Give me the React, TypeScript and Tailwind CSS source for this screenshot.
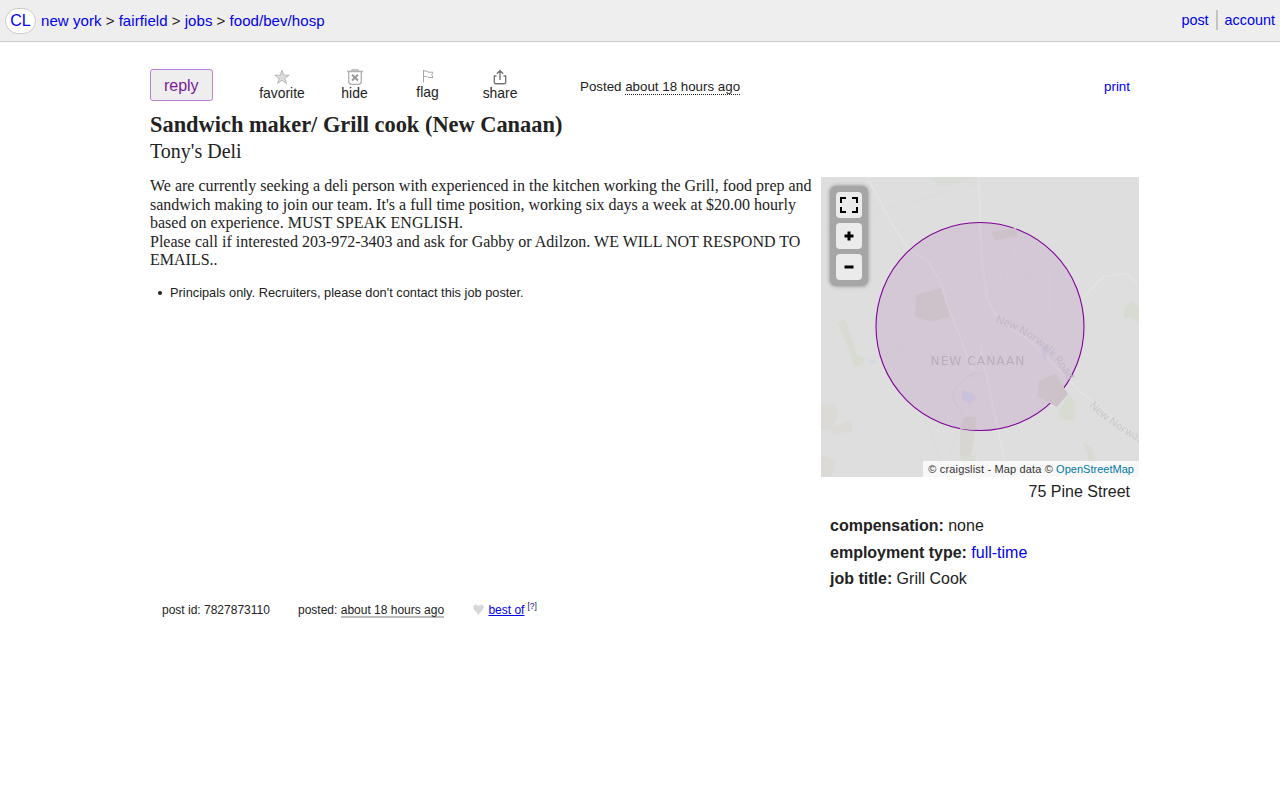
import type { ReactNode } from "react";

const link = "text-[#0000ee]";

function Action({ label, icon, className }: { label: string; icon: ReactNode; className: string }) {
  return (
    <button className={`flex shrink-0 flex-col items-center text-[13.9px] leading-4 ${className}`}>
      <span className="flex h-4 items-center">{icon}</span>
      {label}
    </button>
  );
}

function MapControl({ label, children }: { label: string; children: ReactNode }) {
  return (
    <button aria-label={label} className="flex h-[26px] w-[26px] items-center justify-center rounded-[4px] bg-[#ebebeb]">
      {children}
    </button>
  );
}

function MapTiles() {
  return (
    <svg width="318" height="300" viewBox="0 0 318 300" className="block" fontFamily="'Noto Sans', sans-serif">
      <rect width="318" height="300" fill="#dedede" />
      <g fill="#d5dacd" opacity=".8">
        <path d="M17 145l7-3 12 36 7 3-1 6-9 3-4-14-6-16z" />
        <path d="M140 278l15 1-2 14-8 4-6-6zM238 232l10-14 6 8v18l-16-2zM262 265l9 6 8 29h-14l2-22zM303 132l8-9 7 8v14l-8-5-7 1z" />
        <path d="M108 0l10 10 20-4 18-6z" opacity=".5" />
      </g>
      <g fill="#dad5cd">
        <path d="M0 229l14-3 4 10-9 17H0zM11 250l20-7v11l-20 4zM0 278l15 5-5 17H0z" opacity=".4" />
      </g>
      <g fill="none" stroke="#e3e3e3" strokeWidth="1.6">
        <path d="M47 0q12 28 36 66 8 10 23 17 14 18 20 43l26 67" />
        <path d="M158 0l2 78 6 42q6 24 41 42l53 53 58 47M263 120l10-11 10-10 12-1 9-2 13 10M159 168l28 132M157 300l-2-20" />
      </g>
      <g fill="none" stroke="#d7d7d7" strokeWidth=".6" opacity=".6">
        <path d="M0 55l72-25 86-24M50 42l42 62M62 130l65 173M57 180l111-28M80 230l63-29 61-9 54-20M124 300l18-72M180 109l15-58 57-27M197 71l17 40M184 110l50-24v54M159 110l26 10 40 29M139 157l35-46M117 172l49 36M210 184l45-44M189 195l29 40" />
      </g>
      <circle cx="159" cy="149.5" r="104" fill="#800098" fillOpacity=".1" stroke="#800098" strokeWidth="1.1" />
      <g fill="#cec2ca">
        <path d="M95 118l25-7 9 29-19 5-16-5zM170 55l25-4 2 8-23 4z" />
        <path d="M143 240h12l-1 13-15-1zM218 204l16-8 13 21-11 13-20-11z" />
      </g>
      <path d="M139 253l15 1-1 8-3 16-11 1z" fill="#d0cec6" opacity=".5" />
      <path d="M142 213l7 2 7 6-7 6-9-6zM221 168l6 4-3 12-3-6z" fill="#c8c1dc" opacity=".8" />
      <path d="M47 182l8 1 1 3-7 1z" fill="#d3d9df" />
      <path d="M142 236c-18-20-8-25 2-34 6-6 12-7 18-5" fill="none" stroke="#cbbfcd" strokeWidth=".8" />
      <path id="norwalk" d="M174 145C205 156 235 174 251 212" fill="none" />
      <path id="norwalk-east" d="M268 229C284 245 302 257 345 280" fill="none" />
      <g fontSize="10.8">
        <text fill="#c2b7c4"><textPath href="#norwalk">New Norwalk Road</textPath></text>
        <text fill="#c8c8c8"><textPath href="#norwalk-east">New Norwalk</textPath></text>
      </g>
      <text x="109.5" y="188" fill="#b9adba" fontSize="12.3" textLength="94" fontFamily="'DejaVu Sans', sans-serif">NEW CANAAN</text>
    </svg>
  );
}

export default function App() {
  return (
    <div className="min-h-[800px] bg-white font-['Liberation_Sans',Arial,sans-serif] text-[#222]">
      <header className="flex h-[42px] items-center border-b border-[#ccc] bg-[#eee] pr-[5px] pl-[5px] text-[14.67px]">
        <a className={`mr-[5px] flex h-[26px] w-[31px] items-center justify-center rounded-full border border-[#ccc] bg-white pt-px text-[16px] ${link}`}>CL</a>
        <nav className="flex gap-[4.1px] pt-px text-[15px] tracking-[0.07px]">
          <a className={link}>new york</a>
          <span>&gt;</span>
          <a className={link}>fairfield</a>
          <span>&gt;</span>
          <a className={link}>jobs</a>
          <span>&gt;</span>
          <a className={link}>food/bev/hosp</a>
        </nav>
        <div className={`mb-px ml-auto flex h-5 items-center text-[14.4px] ${link}`}>
          <a className="pt-[2px]">post</a>
          <span className="mr-[7px] ml-[7px] h-5 w-[2px] bg-[#c4c4c4]" />
          <a className="pt-[2px]">account</a>
        </div>
      </header>

      <main className="ml-[150px] w-[989px]">
        <div className="flex h-[59px] items-start pt-[27px]">
          <button className="h-8 w-[62.5px] shrink-0 rounded-[3px] border border-[#b97fd0] bg-[#eee] pt-px text-[16px] text-[#7a1a9b]">reply</button>
          <Action
            label="favorite"
            className="ml-[46px] w-[47px]"
            icon={<svg width="16" height="16" viewBox="0 0 16 16"><path d="M8 1.2l1.7 5h5.5l-4.4 3.2 1.7 5L8 11.3l-4.5 3.1 1.7-5L.8 6.2h5.5z" fill="#ddd" stroke="#b8b8b8" strokeWidth="1" /></svg>}
          />
          <Action
            label="hide"
            className="ml-[34px] w-[30px]"
            icon={<svg width="18" height="16" viewBox="0 0 18 16" fill="none" stroke="#b0b0b0" strokeWidth="1.3"><path d="M1 2.5h16M6 2V.8h6V2M2.7 2.7v9.8q0 2.8 2.8 2.8h7q2.8 0 2.8-2.8V2.7" /><path d="M6 5.8l6 5.6m0-5.6l-6 5.6" stroke="#999" strokeWidth="2" /></svg>}
          />
          <Action
            label="flag"
            className="-mt-px ml-[46px] w-[24px]"
            icon={<svg width="12" height="14" viewBox="0 0 12 14" fill="none" stroke="#aaa" strokeWidth="1"><path d="M1.5 1v12.5M1.5 2H5l1 1.2h5L9.8 5.7 11 8.5H6L5 7.5H1.5" /></svg>}
          />
          <Action
            label="share"
            className="ml-[42px] w-[37px]"
            icon={<svg width="14" height="16" viewBox="0 0 14 16" fill="none" stroke="#777" strokeWidth="1.4"><path d="M3.5 7H1.3v6.3q0 1.4 1.4 1.4h8.6q1.4 0 1.4-1.4V7h-2.2M7 11V2M3.8 4.7L7 1.5l3.2 3.2" /></svg>}
          />
          <p className="ml-[61.5px] pt-[10px] text-[13.33px] leading-[16px]">
            Posted <time className="inline-block h-[16px] border-b border-dotted border-[#222]">about 18 hours ago</time>
          </p>
          <a className={`mr-[9px] ml-auto pt-[10px] text-[13.33px] leading-[16px] ${link}`}>print</a>
        </div>

        <div className="h-[75.6px] pt-[11px] font-['Liberation_Serif',serif]">
          <h1 className="text-[22.4px] leading-[26px] font-bold">Sandwich maker/ Grill cook (New Canaan)</h1>
          <h2 className="text-[20px] leading-[27px]">Tony's Deli</h2>
        </div>

        <div className="flex h-[423.4px]">
          <section className="w-[671px] shrink-0">
            <p className="pt-[0.6px] font-['Liberation_Serif',serif] text-[16px] leading-[18.5px]">
              We are currently seeking a deli person with experienced in the kitchen working the Grill, food prep and<br />
              sandwich making to join our team. It's a full time position, working six days a week at $20.00 hourly<br />
              based on experience. MUST SPEAK ENGLISH.<br />
              Please call if interested 203-972-3403 and ask for Gabby or Adilzon. WE WILL NOT RESPOND TO<br />
              EMAILS..
            </p>
            <ul className="mt-[15px] flex items-center pl-[8px] text-[12.8px] leading-4">
              <li className="flex items-center gap-[8px]">
                <span className="h-[4px] w-[4px] rounded-full bg-[#222]" />
                Principals only. Recruiters, please don't contact this job poster.
              </li>
            </ul>
          </section>

          <aside className="w-[318px] shrink-0">
            <div className="relative h-[300px] overflow-hidden">
              <MapTiles />
              <div className="absolute top-[9px] left-[9px] flex flex-col gap-[5px] rounded-[6px] bg-[#a6a6a6] p-[6px] shadow-[0_0_4px_#888]">
                <MapControl label="Full screen">
                  <svg width="18" height="16" viewBox="0 0 18 16" fill="none" stroke="#000" strokeWidth="2"><path d="M1 6V1h5M12 1h5v5M17 10v5h-5M6 15H1v-5" /></svg>
                </MapControl>
                <MapControl label="Zoom in">
                  <svg width="10" height="10" viewBox="0 0 10 10" stroke="#000" strokeWidth="3"><path d="M5 .5v9M.5 5h9" /></svg>
                </MapControl>
                <MapControl label="Zoom out">
                  <svg width="10" height="10" viewBox="0 0 10 10" stroke="#000" strokeWidth="3"><path d="M.5 5h9" /></svg>
                </MapControl>
              </div>
              <div className="absolute right-0 bottom-0 h-4 w-[216px] bg-[#f8f8f8] pr-[5px] text-right text-[11px] leading-4 tracking-[0.02px] whitespace-nowrap text-[#333]">
                <span className="mr-[3px] tracking-[0.16px]">© craigslist - Map data ©</span><a className="text-[#0078a8]">OpenStreetMap</a>
              </div>
            </div>
            <p className="pt-[5px] pr-[9px] text-right text-[16px] leading-[20px]">75 Pine Street</p>
            <dl className="pt-[11.4px] pl-[9px] text-[16px] leading-[26.6px]">
              <div className="flex gap-[4.4px]"><dt className="font-bold">compensation:</dt><dd>none</dd></div>
              <div className="flex gap-[4.4px]"><dt className="font-bold">employment type:</dt><dd className={link}>full-time</dd></div>
              <div className="flex gap-[4.4px]"><dt className="font-bold">job title:</dt><dd>Grill Cook</dd></div>
            </dl>
          </aside>
        </div>

        <footer className="flex items-center pt-[2px] pl-[12px] text-[12px] leading-[16px]">
          <span className="w-[136px]">post id: 7827873110</span>
          <span className="w-[175px]">posted: <time className="inline-block h-[16px] border-b-2 border-[#bbb]">about 18 hours ago</time></span>
          <svg width="11" height="12" viewBox="0 0 11 12" fill="#d8d8d8"><path d="M5.5 11.7C4.5 8 .2 6.5.2 3 .2-.2 4.5-.5 5.5 2.5 6.5-.5 10.8-.2 10.8 3c0 3.5-4.3 5-5.3 8.7z" /></svg>
          <a className={`ml-[4.4px] underline ${link}`}>best of</a>
          <span className="ml-[3px] -translate-y-[4px] text-[8.5px]">[<a className={link}>?</a>]</span>
        </footer>
      </main>
    </div>
  );
}
